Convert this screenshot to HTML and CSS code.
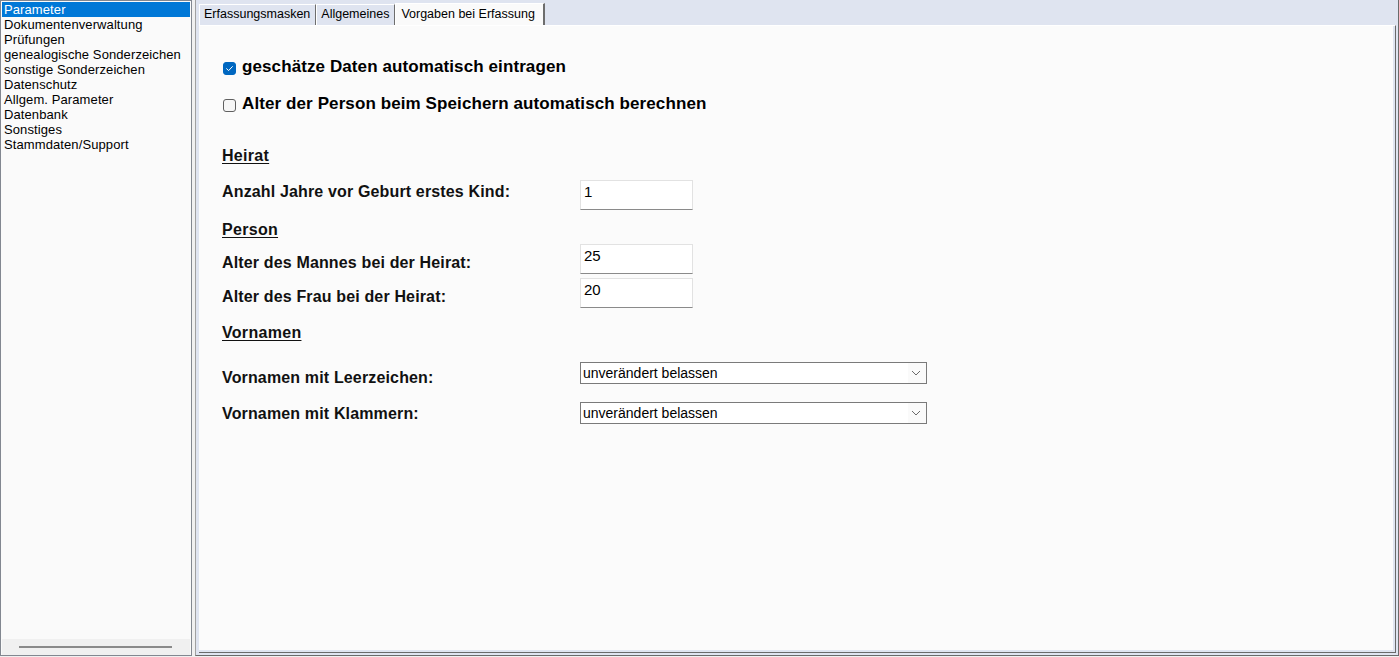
FILE: index.html
```html
<!DOCTYPE html>
<html lang="de">
<head>
<meta charset="utf-8">
<title>Parameter</title>
<link rel="stylesheet" href="styles.css">
</head>
<body>
<aside class="sidebar">
  <ul class="nav">
    <li class="nav-item is-selected">Parameter</li>
    <li class="nav-item">Dokumentenverwaltung</li>
    <li class="nav-item">Prüfungen</li>
    <li class="nav-item">genealogische Sonderzeichen</li>
    <li class="nav-item">sonstige Sonderzeichen</li>
    <li class="nav-item">Datenschutz</li>
    <li class="nav-item">Allgem. Parameter</li>
    <li class="nav-item">Datenbank</li>
    <li class="nav-item">Sonstiges</li>
    <li class="nav-item">Stammdaten/Support</li>
  </ul>
  <div class="hscroll"><div class="hscroll-thumb"></div></div>
</aside>
<main class="main">
  <nav class="tabs">
    <div class="tab">Erfassungsmasken</div>
    <div class="tab">Allgemeines</div>
    <div class="tab is-active">Vorgaben bei Erfassung</div>
  </nav>
  <section class="panel">
    <div class="check-row">
      <span class="box is-checked"><svg viewBox="0 0 13 13" width="13" height="13"><path d="M3.6 6.7 L5.6 8.6 L9.4 4.6" fill="none" stroke="#ffffff" stroke-width="1" stroke-linecap="round" stroke-linejoin="round"/></svg></span>
      <span class="check-text">geschätze Daten automatisch eintragen</span>
    </div>
    <div class="check-row check-row-2">
      <span class="box"></span>
      <span class="check-text">Alter der Person beim Speichern automatisch berechnen</span>
    </div>

    <h3 class="heading heading-heirat">Heirat</h3>
    <div class="field field-kind">
      <label class="field-label">Anzahl Jahre vor Geburt erstes Kind:</label>
      <div class="input">1</div>
    </div>

    <h3 class="heading heading-person">Person</h3>
    <div class="field field-mann">
      <label class="field-label lbl-mann">Alter des Mannes bei der Heirat:</label>
      <div class="input">25</div>
    </div>
    <div class="field field-frau">
      <label class="field-label lbl-frau">Alter des Frau bei der Heirat:</label>
      <div class="input">20</div>
    </div>

    <h3 class="heading heading-vornamen">Vornamen</h3>
    <div class="field field-leer">
      <label class="field-label lbl-leer">Vornamen mit Leerzeichen:</label>
      <div class="select"><span class="select-text">unverändert belassen</span><span class="select-btn"><svg viewBox="0 0 10 6" width="10" height="6"><path d="M1 1 L5 5 L9 1" fill="none" stroke="#6b6b6b" stroke-width="1"/></svg></span></div>
    </div>
    <div class="field field-klammer">
      <label class="field-label lbl-klammer">Vornamen mit Klammern:</label>
      <div class="select"><span class="select-text">unverändert belassen</span><span class="select-btn"><svg viewBox="0 0 10 6" width="10" height="6"><path d="M1 1 L5 5 L9 1" fill="none" stroke="#6b6b6b" stroke-width="1"/></svg></span></div>
    </div>
  </section>
</main>
</body>
</html>
```

FILE: styles.css
```css
* { box-sizing: border-box; }

html, body {
  margin: 0;
  padding: 0;
}

body {
  width: 1399px;
  height: 657px;
  overflow: hidden;
  display: flex;
  align-items: flex-start;
  background: #f0f0f0;
  font-family: "Liberation Sans", Arial, sans-serif;
  color: #000;
}

/* ---------- sidebar ---------- */
.sidebar {
  width: 192px;
  height: 656px;
  border: 1px solid #828790;
  background: #fafafa;
  display: flex;
  flex-direction: column;
}

.nav {
  list-style: none;
  margin: 0;
  padding: 1px 1px 0 1px;
  flex: 1;
}

.nav-item {
  height: 15px;
  line-height: 15px;
  font-size: 13px;
  letter-spacing: 0.1px;
  padding-left: 2px;
  white-space: nowrap;
  color: #000;
}

.nav-item.is-selected {
  background: #0078d7;
  color: #fff;
}

.hscroll {
  height: 16px;
  margin: 0 1px 0 1px;
  background: #f0f0f0;
  display: flex;
  align-items: center;
  padding: 0 18px 0 17px;
}

.hscroll-thumb {
  flex: 1;
  height: 2px;
  background: #8a8a8a;
}

/* ---------- main ---------- */
.main {
  margin-left: 3px;
  width: 1204px;
  height: 656px;
  background: #dfe4f0;
  border-left: 1px solid #a0a0a0;
  border-right: 1px solid #6a6a6a;
  border-bottom: 1px solid #6a6a6a;
  padding: 0 2px 2px 3px;
  display: flex;
  flex-direction: column;
}

.tabs {
  height: 25px;
  padding-top: 4px;
  display: flex;
  align-items: flex-start;
}

.tab {
  height: 21px;
  line-height: 18px;
  font-size: 12.5px;
  padding: 0 5px 2px 4px;
  border-top: 1px solid #ffffff;
  border-left: 1px solid #ffffff;
  border-right: 1px solid #6d6d6d;
  white-space: nowrap;
  color: #000;
}

.tab.is-active {
  height: 22px;
  margin-top: -1px;
  padding: 1px 8px 2px 5px;
  background: #fafafa;
  border-right: 2px solid #6d6d6d;
}

.panel {
  flex: 1;
  background: #fbfbfb;
  border-top: 1px solid #ffffff;
  border-right: 1px solid #6a6a6a;
  border-bottom: 1px solid #6a6a6a;
  box-shadow: inset -2px -2px 0 #dfe4f0;
  padding: 29px 0 0 23px;
  display: flex;
  flex-direction: column;
  align-items: flex-start;
}

/* ---------- checkboxes ---------- */
.check-row {
  height: 24px;
  display: flex;
  align-items: center;
}

.check-row-2 { margin-top: 13px; }

.box {
  width: 13px;
  height: 13px;
  margin: 2px 6px 0 1px;
  border-radius: 3px;
  border: 1px solid #606060;
  background: #f7f7f7;
  display: flex;
}

.box.is-checked {
  border-color: #0067c0;
  background: #0067c0;
}

.box.is-checked svg { margin: -1px; }

.check-text {
  font-size: 17px;
  line-height: 24px;
  font-weight: bold;
  letter-spacing: 0.1px;
  white-space: nowrap;
}

/* ---------- headings ---------- */
.heading {
  margin: 0;
  height: 20px;
  font-size: 16px;
  line-height: 20px;
  font-weight: bold;
  letter-spacing: 0.3px;
  text-decoration: underline;
  text-underline-offset: 2px;
  color: #111;
}

.heading-heirat { margin-top: 30px; }
.heading-person { margin-top: 10px; }
.heading-vornamen { margin-top: 14px; }

/* ---------- fields ---------- */
.field {
  display: flex;
  align-items: flex-start;
}

.field-kind { margin-top: 14px; }
.field-mann { margin-top: 4px; }
.field-frau { margin-top: 3px; }
.field-leer { margin-top: 19px; }
.field-klammer { margin-top: 12px; }

.field-label {
  width: 358px;
  font-size: 16px;
  line-height: 24px;
  font-weight: bold;
  letter-spacing: 0.15px;
  white-space: nowrap;
  color: #111;
}

.lbl-mann { margin-top: 7px; }
.lbl-frau { margin-top: 7px; }
.lbl-leer { margin-top: 4px; }
.lbl-klammer { margin-top: 0; }

.input {
  width: 113px;
  height: 30px;
  background: #ffffff;
  border: 1px solid #e2e2e2;
  border-bottom: 1px solid #8a8a8a;
  font-size: 15px;
  line-height: 17px;
  padding: 2px 3px 0 3px;
  color: #000;
}

.select {
  width: 347px;
  height: 22px;
  background: #ffffff;
  border: 1px solid #7a7a7a;
  display: flex;
  align-items: stretch;
}

.select-text {
  flex: 1;
  font-size: 14px;
  line-height: 20px;
  padding-left: 2px;
  color: #000;
  white-space: nowrap;
}

.select-btn {
  width: 18px;
  display: flex;
  align-items: center;
  justify-content: center;
  background: #fafafa;
  padding-right: 2px;
}
```
